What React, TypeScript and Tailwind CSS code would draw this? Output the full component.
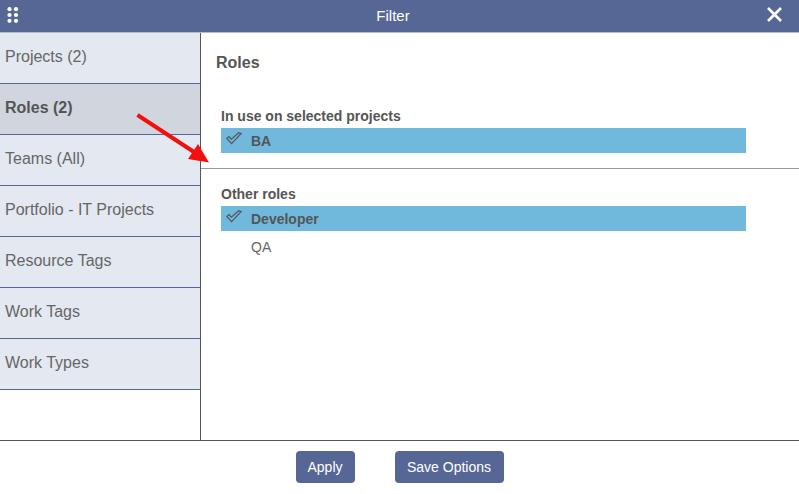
const menuItems = [
  { label: "Projects (2)" },
  { label: "Roles (2)", active: true },
  { label: "Teams (All)" },
  { label: "Portfolio - IT Projects" },
  { label: "Resource Tags" },
  { label: "Work Tags" },
  { label: "Work Types" },
];

const GripIcon = () => (
  <svg width="12" height="16" viewBox="0 0 12 16" fill="white">
    <circle cx="2.5" cy="2.2" r="2.1" />
    <circle cx="9" cy="2.2" r="2.1" />
    <circle cx="2.5" cy="8" r="2.1" />
    <circle cx="9" cy="8" r="2.1" />
    <circle cx="2.5" cy="13.8" r="2.1" />
    <circle cx="9" cy="13.8" r="2.1" />
  </svg>
);

const CheckIcon = () => (
  <svg width="16" height="13" viewBox="0 0 16 13" fill="none" stroke="#555" strokeWidth="1.2">
    <path d="M0.8 6.5 L3 4.6 L5.4 7.2 L12.6 0.8 L15 1.6 L5.6 11.6 Z" />
  </svg>
);

const RoleRow = ({ label, selected }: { label: string; selected?: boolean }) => (
  <div className={`flex h-[25px] w-[525px] items-center ${selected ? "bg-[#70b9dd] font-bold" : "text-[#666]"}`}>
    <div className="mb-1 ml-[5px] w-[25px]">{selected && <CheckIcon />}</div>
    <span>{label}</span>
  </div>
);

export default function App() {
  return (
    <div className="relative flex h-[494px] w-[799px] flex-col overflow-hidden bg-white font-['Liberation_Sans',Arial,sans-serif] text-[#555]">
      <header className="flex h-[33px] shrink-0 items-center justify-between border-b border-[#bbbbbb] bg-[#566796] pr-[17px] pl-[7px] text-white">
        <div className="mb-[3px]">
          <GripIcon />
        </div>
        <span className="text-[15px]">Filter</span>
        <svg width="15" height="15" viewBox="0 0 15 15" stroke="white" strokeWidth="2.6" className="mb-[3px]">
          <path d="M1 1 L14 14 M14 1 L1 14" />
        </svg>
      </header>

      <div className="flex min-h-0 flex-1">
        <nav className="w-[201px] shrink-0 border-r border-[#555]">
          {menuItems.map((item) => (
            <div
              key={item.label}
              className={`flex h-[51px] items-center border-b border-[#566796] pb-[3px] pl-[5px] text-base ${
                item.active ? "bg-[#d1d6de] font-bold" : "bg-[#e4e9f1] text-[#666]"
              }`}
            >
              {item.label}
            </div>
          ))}
        </nav>

        <main className="min-w-0 flex-1 pt-[21px]">
          <h2 className="pl-[15px] text-base leading-[18px] font-bold">Roles</h2>
          <section className="mt-[35px] pl-5 text-sm">
            <h3 className="mb-[3px] text-sm leading-[18px] font-bold">In use on selected projects</h3>
            <RoleRow label="BA" selected />
          </section>
          <hr className="mt-[15px] border-[#999]" />
          <section className="mt-[16px] pl-5 text-sm">
            <h3 className="mb-[3px] text-sm leading-[18px] font-bold">Other roles</h3>
            <RoleRow label="Developer" selected />
            <div className="mt-[3px]">
              <RoleRow label="QA" />
            </div>
          </section>
        </main>
      </div>

      <footer className="flex h-[54px] shrink-0 justify-center gap-10 border-t border-[#555] pt-[10px] text-sm text-white">
        <button className="h-8 w-[59px] rounded-[4px] bg-[#566796]">Apply</button>
        <button className="h-8 w-[109px] rounded-[4px] bg-[#566796]">Save Options</button>
      </footer>

      {/* annotation arrow drawn on top of the screenshot */}
      <svg className="absolute top-[110px] left-[134px]" width="80" height="56" viewBox="0 0 80 56">
        <path d="M3.5 5 L60 42" stroke="#f40f0f" strokeWidth="4" />
        <path d="M75 52.5 L64 34 L54 49 Z" fill="#f40f0f" />
      </svg>
    </div>
  );
}
